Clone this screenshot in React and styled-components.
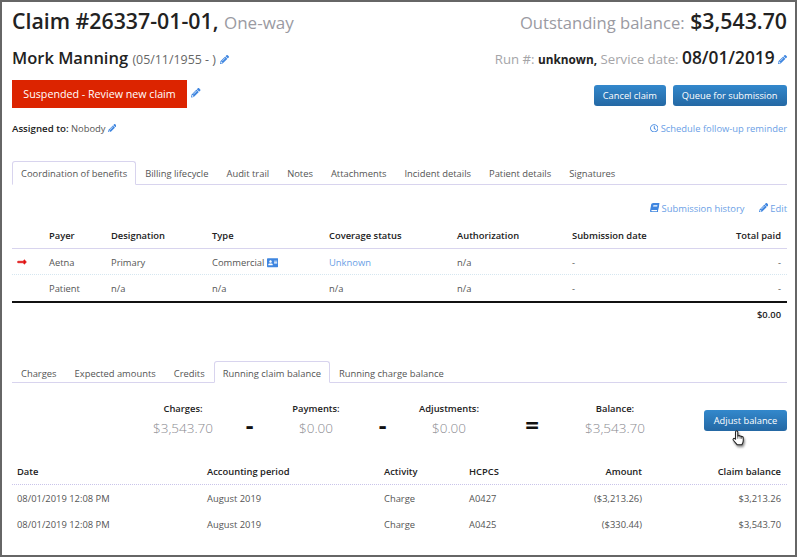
import styled, { createGlobalStyle } from 'styled-components'
import { FaPencilAlt, FaBook, FaAddressCard, FaRegClock, FaLongArrowAltRight } from 'react-icons/fa'

const GlobalStyle = createGlobalStyle`
	html, body {
		margin: 0;
		padding: 0;
		background: #fff;
	}
	* {
		box-sizing: border-box;
	}
`

const payers = [
	{ current: true, payer: 'Aetna', designation: 'Primary', type: 'Commercial', card: true, status: 'Unknown', link: true },
	{ payer: 'Patient', designation: 'n/a', type: 'n/a', status: 'n/a' },
]

const activity = [
	{ date: '08/01/2019 12:08 PM', period: 'August 2019', kind: 'Charge', code: 'A0427', amount: '($3,213.26)', balance: '$3,213.26' },
	{ date: '08/01/2019 12:08 PM', period: 'August 2019', kind: 'Charge', code: 'A0425', amount: '($330.44)', balance: '$3,543.70' },
]

const mainTabs = ['Coordination of benefits', 'Billing lifecycle', 'Audit trail', 'Notes', 'Attachments', 'Incident details', 'Patient details', 'Signatures']
const balanceTabs = ['Charges', 'Expected amounts', 'Credits', 'Running claim balance', 'Running charge balance']

const App = () => (
	<Page>
		<GlobalStyle />
		<TopRow>
			<Title>Claim #26337-01-01, <Muted>One-way</Muted></Title>
			<Title><BalanceLabel>Outstanding balance:</BalanceLabel> $3,543.70</Title>
		</TopRow>
		<SubRow>
			<Name>Mork Manning <NameNote>(05/11/1955 - )</NameNote> <EditIcon /></Name>
			<RunInfo>
				<Faded>Run #:</Faded> <b>unknown,</b> <Faded>Service date:</Faded> <ServiceDate>08/01/2019</ServiceDate> <EditIcon />
			</RunInfo>
		</SubRow>
		<ActionRow>
			<StatusGroup>
				<StatusBadge>Suspended - Review new claim</StatusBadge>
				<EditIcon />
			</StatusGroup>
			<Buttons>
				<Button>Cancel claim</Button>
				<Button>Queue for submission</Button>
			</Buttons>
		</ActionRow>
		<AssignRow>
			<span><b>Assigned to:</b> Nobody <EditIcon /></span>
			<LinkText><FaRegClock /> Schedule follow-up reminder</LinkText>
		</AssignRow>
		<Tabs $top={25} $height={25}>
			{mainTabs.map((tab, i) => <Tab key={tab} $active={i === 0}>{tab}</Tab>)}
		</Tabs>
		<LinksRow>
			<LinkText><BookIcon /> Submission history</LinkText>
			<LinkText><FaPencilAlt /> Edit</LinkText>
		</LinksRow>
		<PayerHead>
			<span />
			<span>Payer</span>
			<span>Designation</span>
			<span>Type</span>
			<span>Coverage status</span>
			<span>Authorization</span>
			<span>Submission date</span>
			<RightCell>Total paid</RightCell>
		</PayerHead>
		{payers.map(row => (
			<PayerRow key={row.payer} $last={!row.current}>
				<span>{row.current && <CurrentArrow />}</span>
				<span>{row.payer}</span>
				<span>{row.designation}</span>
				<span>{row.type} {row.card && <CardIcon />}</span>
				{row.link ? <LinkText>{row.status}</LinkText> : <span>{row.status}</span>}
				<span>n/a</span>
				<span>-</span>
				<RightCell>-</RightCell>
			</PayerRow>
		))}
		<TotalRow>$0.00</TotalRow>
		<Tabs $top={33} $height={23}>
			{balanceTabs.map((tab, i) => <Tab key={tab} $active={i === 3}>{tab}</Tab>)}
		</Tabs>
		<Summary>
			<SummaryItem><SummaryLabel>Charges:</SummaryLabel><SummaryValue>$3,543.70</SummaryValue></SummaryItem>
			<Operator>-</Operator>
			<SummaryItem><SummaryLabel>Payments:</SummaryLabel><SummaryValue>$0.00</SummaryValue></SummaryItem>
			<Operator>-</Operator>
			<SummaryItem><SummaryLabel>Adjustments:</SummaryLabel><SummaryValue>$0.00</SummaryValue></SummaryItem>
			<Operator>=</Operator>
			<SummaryItem><SummaryLabel>Balance:</SummaryLabel><SummaryValue>$3,543.70</SummaryValue></SummaryItem>
			<AdjustWrap>
				<AdjustButton>Adjust balance</AdjustButton>
				<Cursor viewBox='0 0 20 24'>
					<path d='M7 2.2c1-.9 2.6-.3 2.7 1.2V9l1.3-.3c.9-.2 1.6.1 2 .7.9-.4 1.900-.1 2.300.7 1-.3 2.100.3 2.200 1.500v4.400c0 2.400-1 3.900-1.900 5.500H8.700L3.300 15.200c-1.100-1.500.5-3.400 2.100-2.300l1.100.9V3.500c0-.5.100-1 .5-1.300z' fill='#fff' stroke='#222' strokeWidth='1.500' strokeLinejoin='round' />
					<path d='M9.700 9v4M13 9.500v3.500M15.300 10.200v3' stroke='#222' strokeWidth='1' fill='none' />
				</Cursor>
			</AdjustWrap>
		</Summary>
		<ActivityHead>
			<span>Date</span>
			<span>Accounting period</span>
			<span>Activity</span>
			<span>HCPCS</span>
			<RightCell>Amount</RightCell>
			<RightCell>Claim balance</RightCell>
		</ActivityHead>
		{activity.map(row => (
			<ActivityRow key={row.code}>
				<span>{row.date}</span>
				<span>{row.period}</span>
				<span>{row.kind}</span>
				<span>{row.code}</span>
				<RightCell>{row.amount}</RightCell>
				<RightCell>{row.balance}</RightCell>
			</ActivityRow>
		))}
	</Page>
)

const Page = styled.div`
	width: 797px;
	height: 557px;
	overflow: hidden;
	border: 2px solid #666;
	padding: 0 8px 0 10px;
	background: #fff;
	color: #555;
	font-family: 'Open Sans', 'Noto Sans', sans-serif;
	font-size: 9.4px;
	b {
		font-size: 9.700px;
		font-weight: 600;
		color: #222;
	}
`

const TopRow = styled.div`
	display: flex;
	justify-content: space-between;
	align-items: baseline;
	height: 33px;
	padding-top: 5px;
`

const Title = styled.div`
	font-size: 21.300px;
	line-height: 27px;
	font-weight: 600;
	color: #222;
`

const Muted = styled.span`
	font-size: 17px;
	font-weight: 400;
	color: #9a9aa2;
`

const BalanceLabel = styled(Muted)`
	font-size: 16.600px;
`

const SubRow = styled.div`
	display: flex;
	justify-content: space-between;
	align-items: baseline;
	height: 34px;
	padding-top: 11px;
`

const Name = styled.div`
	font-size: 16.500px;
	font-weight: 600;
	color: #222;
	svg {
		font-size: 9px;
	}
`

const NameNote = styled.span`
	font-size: 12.400px;
	font-weight: 400;
	color: #666;
`

const RunInfo = styled.div`
	font-size: 13.200px;
	b {
		font-size: 11.800px;
		font-weight: 700;
	}
	svg {
		font-size: 9px;
	}
`

const Faded = styled.span`
	color: #a5a5a8;
`

const ServiceDate = styled.span`
	font-size: 17.300px;
	font-weight: 600;
	color: #222;
`

const EditIcon = styled(FaPencilAlt)`
	color: #3f86e0;
	font-size: 8.500px;
`

const ActionRow = styled.div`
	display: flex;
	justify-content: space-between;
	align-items: flex-start;
	height: 41px;
	margin-top: 11px;
`

const StatusGroup = styled.div`
	display: flex;
	align-items: flex-start;
	gap: 4px;
	svg {
		margin-top: 8px;
		font-size: 9.500px;
	}
`

const StatusBadge = styled.div`
	width: 175px;
	height: 28px;
	background: #dc2400;
	color: #fff;
	font-size: 10.700px;
	line-height: 28px;
	text-align: center;
`

const Buttons = styled.div`
	display: flex;
	gap: 7px;
	margin-top: 5px;
	padding-right: 0.500px;
`

const Button = styled.button`
	height: 21px;
	padding: 0 9px;
	border: 0;
	border-radius: 3px;
	background: linear-gradient(#3388cc, #2468a4);
	color: #fff;
	font-family: inherit;
	font-size: 9.300px;
	white-space: nowrap;
`

const AssignRow = styled.div`
	display: flex;
	justify-content: space-between;
	align-items: center;
	height: 14px;
	svg {
		font-size: 8.500px;
		vertical-align: -0.5px;
	}
`

const LinkText = styled.span`
	color: #6c9fe6;
	font-size: 9.400px;
	svg {
		color: #3f86e0;
	}
`

const BookIcon = styled(FaBook)`
	transform: skewX(-10deg);
`

const Tabs = styled.div`
	display: flex;
	align-items: flex-end;
	height: ${p => p.$height}px;
	margin-top: ${p => p.$top}px;
	border-bottom: 1px solid #d8d4ee;
`

const Tab = styled.div`
	height: ${p => p.$active ? '100%' : 'calc(100% - 1px)'};
	margin-bottom: ${p => p.$active ? '-1px' : '0'};
	padding: 0 8px;
	border: 1px solid ${p => p.$active ? '#d8d4ee' : 'transparent'};
	border-bottom: 1px solid ${p => p.$active ? '#fff' : 'transparent'};
	border-radius: 3px 3px 0 0;
	background: #fff;
	color: #555;
	font-size: 9.400px;
	line-height: 23px;
	white-space: nowrap;
`

const LinksRow = styled.div`
	display: flex;
	justify-content: flex-end;
	gap: 14px;
	height: 17px;
	margin-top: 17px;
`

const payerColumns = '37px 62px 101px 117px 128px 115px 1fr'

const PayerHead = styled.div`
	display: grid;
	grid-template-columns: ${payerColumns} 100px;
	align-items: center;
	height: 30px;
	padding: 3px 6px 0 0;
	border-bottom: 1px solid #d8d4ee;
	font-weight: 600;
	color: #222;
`

const PayerRow = styled.div`
	display: grid;
	grid-template-columns: ${payerColumns} 100px;
	align-items: center;
	height: ${p => p.$last ? '28px' : '26px'};
	padding: 1px 6px 0 0;
	border-bottom: ${p => p.$last ? '2px solid #111' : '1px dotted #d5e6f0'};
`

const RightCell = styled.span`
	text-align: right;
`

const CurrentArrow = styled(FaLongArrowAltRight)`
	margin-left: 5px;
	color: #e01010;
	font-size: 10px;
	vertical-align: -1px;
	stroke: currentColor;
	stroke-width: 30px;
`

const CardIcon = styled(FaAddressCard)`
	color: #3f86e0;
	font-size: 11.500px;
	vertical-align: -2.5px;
`

const TotalRow = styled.div`
	height: 24px;
	padding-right: 6px;
	font-weight: 600;
	color: #222;
	line-height: 23px;
	text-align: right;
`

const Summary = styled.div`
	display: grid;
	grid-template-columns: 128.500px 85px 48px 85px 48px 85px 81px 85px 1fr;
	height: 76px;
	padding-top: 19px;
`

const SummaryItem = styled.div`
	display: flex;
	flex-direction: column;
	align-items: center;
	&:first-child {
		grid-column: 2;
	}
`

const SummaryLabel = styled.div`
	font-weight: 600;
	color: #222;
	line-height: 14px;
`

const SummaryValue = styled.div`
	margin-top: 2px;
	font-size: 13.500px;
	font-weight: 300;
	line-height: 20px;
	color: #8a8a90;
`

const Operator = styled.div`
	margin-top: 8px;
	font-size: 24px;
	font-weight: 700;
	line-height: 30px;
	text-align: center;
	color: #111;
`

const AdjustWrap = styled.div`
	position: relative;
	display: flex;
	justify-content: flex-end;
	align-items: flex-start;
`

const AdjustButton = styled(Button)`
	width: 83px;
	padding: 0;
	margin-top: 8px;
`

const Cursor = styled.svg`
	position: absolute;
	right: 42px;
	top: 27px;
	width: 14px;
	height: 18px;
	filter: drop-shadow(1px 2px 1px rgba(0, 0, 0, 0.45));
`

const activityColumns = '190px 177px 85px 90px 1fr 139px'

const ActivityHead = styled.div`
	display: grid;
	grid-template-columns: ${activityColumns};
	align-items: center;
	height: 26px;
	padding: 0 6px 0 5px;
	border-bottom: 1px dotted #c9c4ea;
	font-weight: 600;
	color: #222;
`

const ActivityRow = styled.div`
	display: grid;
	grid-template-columns: ${activityColumns};
	align-items: center;
	height: 26px;
	padding: 0 6px 0 5px;
`

export default App
